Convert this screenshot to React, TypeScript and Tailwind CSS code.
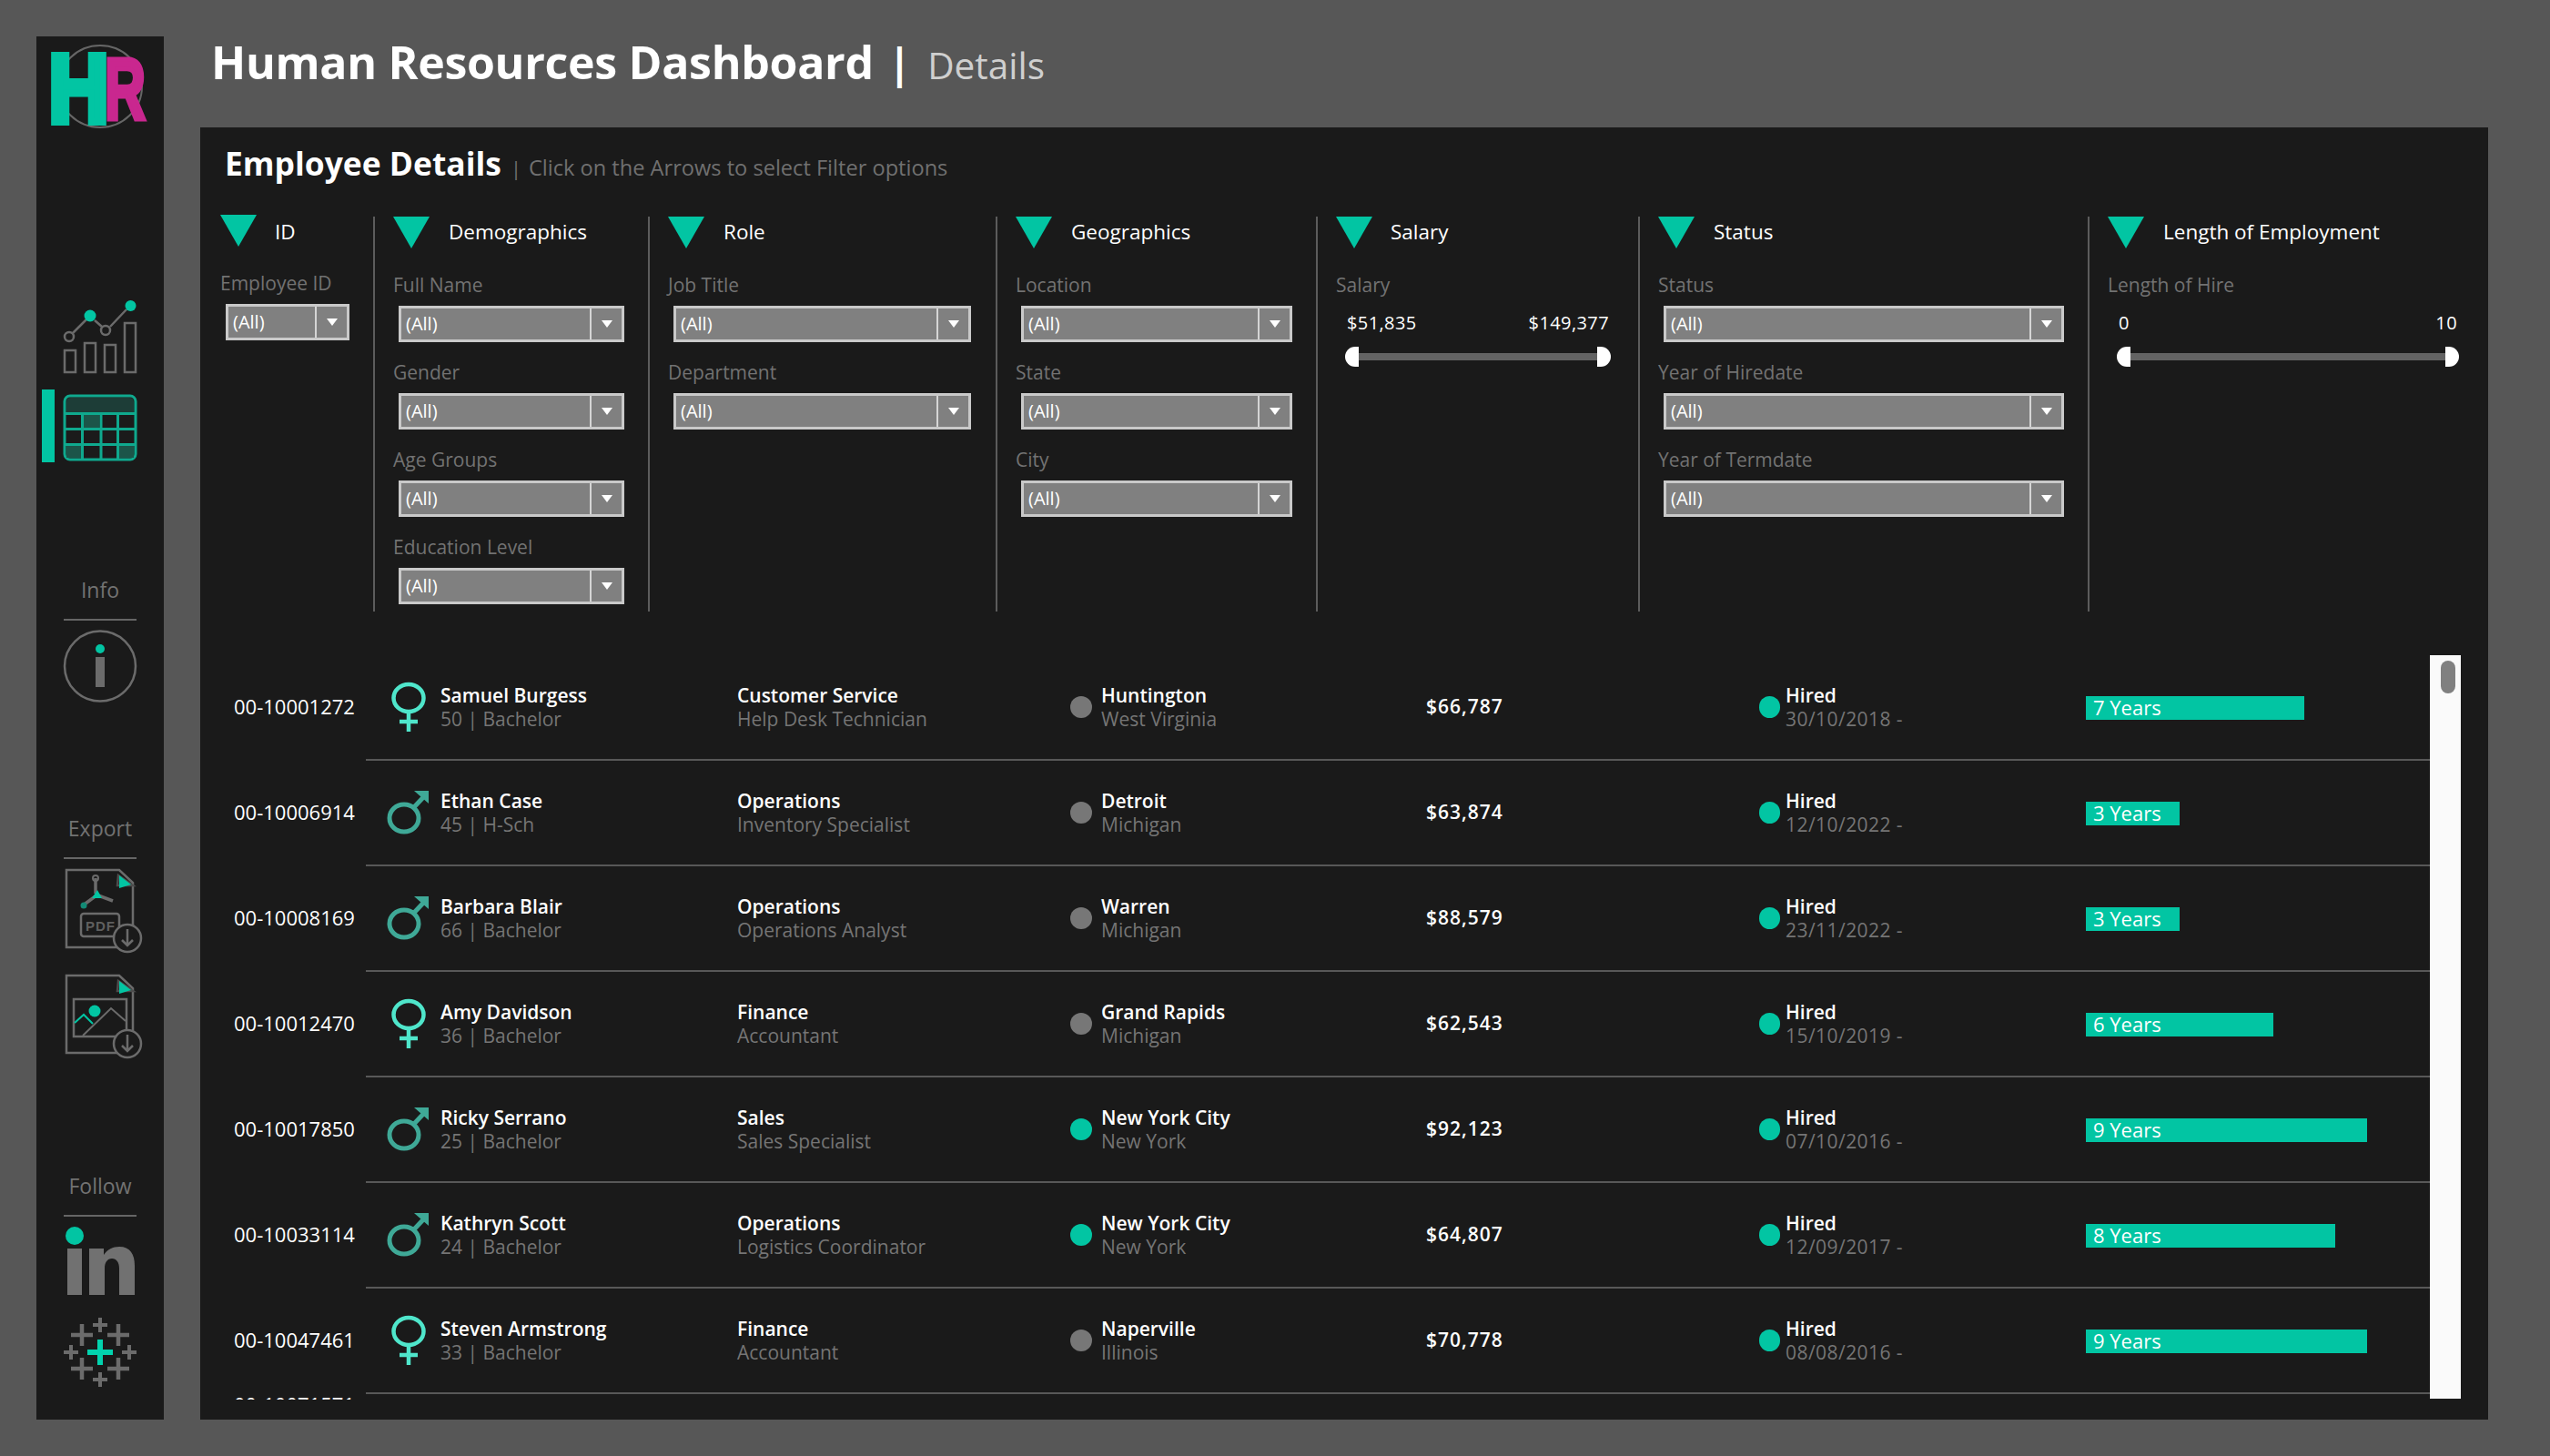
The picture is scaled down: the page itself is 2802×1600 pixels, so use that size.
import React from 'react';

const TEAL = '#02c5a3';
const LINE = '#6b6b6b';

type Employee = {
  id: string;
  gender: 'f' | 'm';
  name: string;
  meta: string;
  dept: string;
  title: string;
  city: string;
  state: string;
  active: boolean;
  salary: string;
  hired: string;
  years: number;
};

const employees: Employee[] = [
  { id: '00-10001272', gender: 'f', name: 'Samuel Burgess', meta: '50 | Bachelor', dept: 'Customer Service', title: 'Help Desk Technician', city: 'Huntington', state: 'West Virginia', active: false, salary: '$66,787', hired: '30/10/2018 -', years: 7 },
  { id: '00-10006914', gender: 'm', name: 'Ethan Case', meta: '45 | H-Sch', dept: 'Operations', title: 'Inventory Specialist', city: 'Detroit', state: 'Michigan', active: false, salary: '$63,874', hired: '12/10/2022 -', years: 3 },
  { id: '00-10008169', gender: 'm', name: 'Barbara Blair', meta: '66 | Bachelor', dept: 'Operations', title: 'Operations Analyst', city: 'Warren', state: 'Michigan', active: false, salary: '$88,579', hired: '23/11/2022 -', years: 3 },
  { id: '00-10012470', gender: 'f', name: 'Amy Davidson', meta: '36 | Bachelor', dept: 'Finance', title: 'Accountant', city: 'Grand Rapids', state: 'Michigan', active: false, salary: '$62,543', hired: '15/10/2019 -', years: 6 },
  { id: '00-10017850', gender: 'm', name: 'Ricky Serrano', meta: '25 | Bachelor', dept: 'Sales', title: 'Sales Specialist', city: 'New York City', state: 'New York', active: true, salary: '$92,123', hired: '07/10/2016 -', years: 9 },
  { id: '00-10033114', gender: 'm', name: 'Kathryn Scott', meta: '24 | Bachelor', dept: 'Operations', title: 'Logistics Coordinator', city: 'New York City', state: 'New York', active: true, salary: '$64,807', hired: '12/09/2017 -', years: 8 },
  { id: '00-10047461', gender: 'f', name: 'Steven Armstrong', meta: '33 | Bachelor', dept: 'Finance', title: 'Accountant', city: 'Naperville', state: 'Illinois', active: false, salary: '$70,778', hired: '08/08/2016 -', years: 9 },
];

const Logo = () => (
  <svg width="140" height="120" viewBox="0 0 140 120">
    <ellipse cx="70" cy="55" rx="46" ry="45" fill="none" stroke="#666" strokeWidth="2" />
    <text x="75" y="90.5" textLength="45" lengthAdjust="spacingAndGlyphs" fontFamily="Liberation Sans" fontWeight="700" fontSize="97" fill="#c9278f" stroke="#c9278f" strokeWidth="5">R</text>
    <text x="13.4" y="94" textLength="66" lengthAdjust="spacingAndGlyphs" fontFamily="Liberation Sans" fontWeight="700" fontSize="106" fill={TEAL} stroke={TEAL} strokeWidth="8">H</text>
  </svg>
);

const NavIcons = () => (
  <svg width="140" height="190" viewBox="0 0 140 190" fill="none">
    <g stroke={LINE} strokeWidth="2.5">
      <rect x="31" y="65" width="12" height="24" />
      <rect x="53" y="57" width="12" height="32" />
      <rect x="75" y="59" width="12" height="30" />
      <rect x="97" y="35" width="12" height="54" />
      <path d="M40 46 L55 31 M64 32 L72 39 M81 39 L99 20" />
      <circle cx="36" cy="50" r="5" />
      <circle cx="76" cy="43" r="5" />
    </g>
    <circle cx="59" cy="27" r="6.5" fill={TEAL} />
    <circle cx="103.5" cy="16" r="6" fill={TEAL} />
    <rect x="6" y="108" width="14" height="80" fill={TEAL} />
    <rect x="31" y="115" width="78" height="70" rx="6" fill="#1b1b1b" stroke="#0fa98e" strokeWidth="3" />
    <path d="M33 134 V122 Q33 117 38 117 H102 Q107 117 107 122 V134 Z" fill="#1d3d37" />
    <rect x="52" y="136" width="17" height="14" fill="#1c5549" />
    <rect x="33" y="170" width="17" height="13" fill="#1c5549" />
    <rect x="91" y="170" width="16" height="13" fill="#1c5549" />
    <path d="M31 134.5 H109 M31 151.5 H109 M31 168.5 H109 M50.5 134 V185 M71 134 V185 M89.5 134 V185" stroke="#0fa98e" strokeWidth="3" />
  </svg>
);

const InfoIcon = () => (
  <svg width="140" height="96" viewBox="0 0 140 96" fill="none">
    <ellipse cx="70" cy="50" rx="39" ry="38.5" stroke={LINE} strokeWidth="2.5" />
    <circle cx="70" cy="31" r="5" fill={TEAL} />
    <rect x="65" y="40" width="10" height="33" fill={LINE} />
  </svg>
);

const DownloadBadge = ({ cy }: { cy: number }) => (
  <g>
    <circle cx="90" cy={cy} r="15" fill="#1a1a1a" stroke={LINE} strokeWidth="2.5" />
    <path d={`M90 ${cy - 10} V${cy + 8} M84 ${cy + 2} L90 ${cy + 8} L96 ${cy + 2}`} stroke={LINE} strokeWidth="2.5" />
  </g>
);

const DocShape = ({ top }: { top: number }) => (
  <g>
    <path d={`M23 ${top} H81 L96 ${top + 14} V${top + 85} H23 Z`} stroke={LINE} strokeWidth="2.5" fill="none" />
    <path d={`M80 ${top + 6} L96 ${top + 17} H79 Z`} fill="#1a1a1a" stroke="#4d4d4d" strokeWidth="2.5" />
    <path d={`M81 ${top + 6} L94 ${top + 16} L81 ${top + 20} Z`} fill={TEAL} />
  </g>
);

const ExportIcons = () => (
  <svg width="120" height="225" viewBox="0 0 120 225" fill="none">
    <DocShape top={12} />
    <path d="M55 21 V38 M56 40 L41 51 M58 40 L74 46" stroke={LINE} strokeWidth="3.5" />
    <circle cx="55" cy="21" r="3" stroke={LINE} strokeWidth="2" />
    <path d="M51 43 L57 34 L62 43 Z" fill={TEAL} />
    <circle cx="42" cy="51" r="3.5" fill="#138a75" />
    <rect x="39" y="60" width="42" height="25" rx="3" stroke={LINE} strokeWidth="2.5" fill="#1a1a1a" />
    <text x="44" y="79" fontFamily="Liberation Sans" fontWeight="700" fontSize="15" fill="#5f5f5f" textLength="32">PDF</text>
    <DownloadBadge cy={87} />
    <DocShape top={128} />
    <rect x="31" y="154" width="58" height="41" stroke={LINE} strokeWidth="2.5" />
    <path d="M41 194 L72 164 L88 178" stroke={LINE} strokeWidth="2" />
    <path d="M32 180 L42 171 L52 181" stroke={TEAL} strokeWidth="2" />
    <circle cx="54" cy="167" r="6.5" fill={TEAL} />
    <DownloadBadge cy={203} />
  </svg>
);

const plus = (x: number, y: number, a: number, w: number, c: string) => (
  <path key={`${x}-${y}`} d={`M${x - a} ${y} H${x + a} M${x} ${y - a} V${y + a}`} stroke={c} strokeWidth={w} />
);

const FollowIcons = () => (
  <svg width="120" height="192" viewBox="0 8 120 192" fill="none">
    <circle cx="32" cy="29" r="10" fill={TEAL} />
    <rect x="24" y="43" width="16" height="51" fill="#717171" />
    <path d="M48 43 H64 V50 C68 44 74 41 81 41 C93 41 98 49 98 62 V94 H81 V65 C81 58 78 54 73 54 C68 54 65 58 65 65 V94 H48 Z" fill="#717171" />
    {plus(40, 138, 12, 4.5, LINE)}
    {plus(80, 138, 12, 4.5, LINE)}
    {plus(40, 175, 12, 4.5, LINE)}
    {plus(80, 175, 12, 4.5, LINE)}
    {plus(60, 127, 8, 4, LINE)}
    {plus(60, 187, 8, 4, LINE)}
    {plus(28, 157, 8, 4, LINE)}
    {plus(92, 157, 8, 4, LINE)}
    {plus(60, 157, 14, 6, '#02d3ae')}
  </svg>
);

const SideLabel = ({ children }: { children: React.ReactNode }) => (
  <div className="h-[47px] w-[80px] mx-auto border-b-2 border-[#666] flex justify-center whitespace-nowrap text-[#727272] text-[23px] leading-[26px]">
    {children}
  </div>
);

const Sidebar = () => (
  <div className="w-[140px] h-[1520px] shrink-0 bg-[#1a1a1a] flex flex-col">
    <Logo />
    <div className="mt-[160px] h-[190px]"><NavIcons /></div>
    <div className="mt-[125px]"><SideLabel>Info</SideLabel></div>
    <div className="h-[96px]"><InfoIcon /></div>
    <div className="mt-[119px]"><SideLabel>Export</SideLabel></div>
    <div className="h-[225px] flex justify-center"><ExportIcons /></div>
    <div className="mt-[121px]"><SideLabel>Follow</SideLabel></div>
    <div className="flex justify-center"><FollowIcons /></div>
  </div>
);

const Triangle = () => (
  <div className="w-0 h-0 border-l-[20px] border-r-[20px] border-t-[35px] border-l-transparent border-r-transparent border-t-[#02c5a3]" />
);

const Dropdown = ({ w, label }: { w: string; label: string }) => (
  <div className="h-[96px]">
    <div className="h-[36px] text-[21px] leading-[27px] text-[#727272]">{label}</div>
    <div className={`${w} ml-[6px] h-[40px] flex bg-[#808080] border-[3px] border-[#c9c9c9]`}>
      <div className="flex-1 pl-[5px] text-white text-[20px] leading-[34px]">(All)</div>
      <div className="w-[35px] border-l-2 border-[#d5d5d5] flex items-center justify-center">
        <div className="w-0 h-0 border-l-[6px] border-r-[6px] border-t-[8px] border-l-transparent border-r-transparent border-t-white" />
      </div>
    </div>
  </div>
);

const RangeSlider = ({ label, min, max, w }: { label: string; min: string; max: string; w: string }) => (
  <div>
    <div className="h-[36px] text-[21px] leading-[27px] text-[#727272]">{label}</div>
    <div className={`${w} ml-[10px] flex flex-col`}>
      <div className="h-[38px] px-[2px] flex justify-between text-white text-[20px] tracking-[0.4px] leading-[38px]">
        <span>{min}</span>
        <span>{max}</span>
      </div>
      <div className="flex items-center h-[22px] mt-[7px]">
        <div className="w-[15px] h-[22px] bg-white rounded-l-full" />
        <div className="flex-1 h-[8px] bg-[#636363]" />
        <div className="w-[15px] h-[22px] bg-white rounded-r-full" />
      </div>
    </div>
  </div>
);

const FilterColumn = ({ width, title, gap, first, children }: { width: string; title: string; gap: string; first?: boolean; children: React.ReactNode }) => (
  <div className={`${width} h-[434px] shrink-0 ${first ? 'pl-[22px]' : 'pl-[20px] border-l-2 border-[#5c5c5c]'}`}>
    <div className={first ? '-mt-[2px]' : ''}>
      <div className="h-[62px] flex items-start">
        <Triangle />
        <div className={`${gap} ${first ? 'mt-[2px]' : ''} text-white text-[22.5px] leading-[34px]`}>{title}</div>
      </div>
      {children}
    </div>
  </div>
);

const Filters = () => (
  <div className="mt-[22px] flex">
    <FilterColumn width="w-[190px]" title="ID" gap="ml-[20px]" first>
      <Dropdown w="w-[136px]" label="Employee ID" />
    </FilterColumn>
    <FilterColumn width="w-[302px]" title="Demographics" gap="ml-[21px]">
      <Dropdown w="w-[248px]" label="Full Name" />
      <Dropdown w="w-[248px]" label="Gender" />
      <Dropdown w="w-[248px]" label="Age Groups" />
      <Dropdown w="w-[248px]" label="Education Level" />
    </FilterColumn>
    <FilterColumn width="w-[382px]" title="Role" gap="ml-[21px]">
      <Dropdown w="w-[327px]" label="Job Title" />
      <Dropdown w="w-[327px]" label="Department" />
    </FilterColumn>
    <FilterColumn width="w-[352px]" title="Geographics" gap="ml-[21px]">
      <Dropdown w="w-[298px]" label="Location" />
      <Dropdown w="w-[298px]" label="State" />
      <Dropdown w="w-[298px]" label="City" />
    </FilterColumn>
    <FilterColumn width="w-[354px]" title="Salary" gap="ml-[20px]">
      <RangeSlider w="w-[292px]" label="Salary" min="$51,835" max="$149,377" />
    </FilterColumn>
    <FilterColumn width="w-[494px]" title="Status" gap="ml-[21px]">
      <Dropdown w="w-[440px]" label="Status" />
      <Dropdown w="w-[440px]" label="Year of Hiredate" />
      <Dropdown w="w-[440px]" label="Year of Termdate" />
    </FilterColumn>
    <FilterColumn width="w-[440px]" title="Length of Employment" gap="ml-[21px]">
      <RangeSlider w="w-[376px]" label="Length of Hire" min="0" max="10" />
    </FilterColumn>
  </div>
);

const Female = () => (
  <svg width="48" height="56" viewBox="0 0 48 56" fill="none" stroke="#4fe6cb" strokeWidth="4.5">
    <ellipse cx="24" cy="18" rx="16.5" ry="15" />
    <path d="M24 33 V55 M14 44 H34" />
  </svg>
);

const Male = () => (
  <svg width="48" height="50" viewBox="0 0 48 50" fill="none" stroke="#3fa997" strokeWidth="5">
    <ellipse cx="19" cy="31" rx="16" ry="15" />
    <path d="M30 19 L44 4" />
    <path d="M30 1 H46 V15 Z" fill="#3fa997" stroke="none" />
  </svg>
);

const TwoLine = ({ top, bottom, width, bottomTracking = '' }: { top: string; bottom: string; width: string; bottomTracking?: string }) => (
  <div className={`${width} shrink-0`}>
    <div className="text-white font-semibold text-[21px] leading-[26px]">{top}</div>
    <div className={`${bottomTracking} text-[#757575] text-[21px] leading-[26px]`}>{bottom}</div>
  </div>
);

const Row = ({ e }: { e: Employee }) => (
  <div className="h-[116px] flex">
    <div className="w-[182px] pl-[37px] shrink-0 flex items-center text-white text-[22px] pb-[3px]">{e.id}</div>
    <div className="flex-1 flex items-center border-b-2 border-[#585858]">
      <div className="w-[82px] shrink-0 flex justify-center pl-[11px]">{e.gender === 'f' ? <Female /> : <Male />}</div>
      <TwoLine width="w-[326px]" top={e.name} bottom={e.meta} />
      <TwoLine width="w-[366px]" top={e.dept} bottom={e.title} />
      <div className="w-[34px] shrink-0"><div className={`w-[24px] h-[24px] rounded-full ${e.active ? 'bg-[#02c5a3]' : 'bg-[#777777]'}`} /></div>
      <TwoLine width="w-[357px]" top={e.city} bottom={e.state} />
      <div className="w-[366px] shrink-0 text-white text-[21px] tracking-[1px] font-semibold">{e.salary}</div>
      <div className="w-[29px] shrink-0"><div className="w-[23px] h-[24px] rounded-full bg-[#02c5a3]" /></div>
      <TwoLine width="w-[330px]" top="Hired" bottom={e.hired} bottomTracking="tracking-[0.45px]" />
      <div className="flex-1 mt-[2px]">
        <div className="h-[26px] bg-[#02c5a3] text-white text-[22px] leading-[25px] pl-[8px]" style={{ width: `${e.years * 34.3}px` }}>
          {e.years} Years
        </div>
      </div>
    </div>
  </div>
);

const Table = () => (
  <div className="mt-[48px] h-[818px] flex overflow-hidden">
    <div className="w-[2450px] shrink-0">
      {employees.map((e) => <Row key={e.id} e={e} />)}
      <div className="pl-[37px] -mt-[4px] text-white text-[22px] leading-[30px]">00-10071571</div>
    </div>
    <div className="w-[34px] h-[817px] bg-[#fafafa] pt-[6px] pl-[12px]">
      <div className="w-[16px] h-[36px] rounded-full bg-[#808080]" />
    </div>
  </div>
);

export default function App() {
  return (
    <div className="w-[2802px] h-[1600px] bg-[#575757] overflow-hidden flex gap-[40px] pl-[40px] pt-[40px] font-['Open_Sans','Liberation_Sans',sans-serif]">
      <Sidebar />
      <div className="w-[2514px] shrink-0">
        <div className="h-[100px] -mt-[40px] pt-[40px] pl-[12px] flex items-baseline whitespace-nowrap">
          <span className="text-white font-bold text-[50px] tracking-[-0.3px] leading-[56px]">Human Resources Dashboard</span>
          <span className="ml-[16px] text-white font-bold text-[46px] leading-[56px]">|</span>
          <span className="ml-[18px] text-[#cfcfcf] text-[40.5px] leading-[56px]">Details</span>
        </div>
        <div className="mt-[40px] h-[1420px] bg-[#1a1a1a] pt-[14px]">
          <div className="h-[62px] pl-[27px] flex items-baseline whitespace-nowrap">
            <span className="text-white font-bold text-[35.4px] leading-[50px]">Employee Details</span>
            <span className="ml-[10px] text-[#707070] text-[22px]">|</span>
            <span className="ml-[8px] text-[#707070] text-[23.6px]">Click on the Arrows to select Filter options</span>
          </div>
          <Filters />
          <Table />
        </div>
      </div>
    </div>
  );
}
